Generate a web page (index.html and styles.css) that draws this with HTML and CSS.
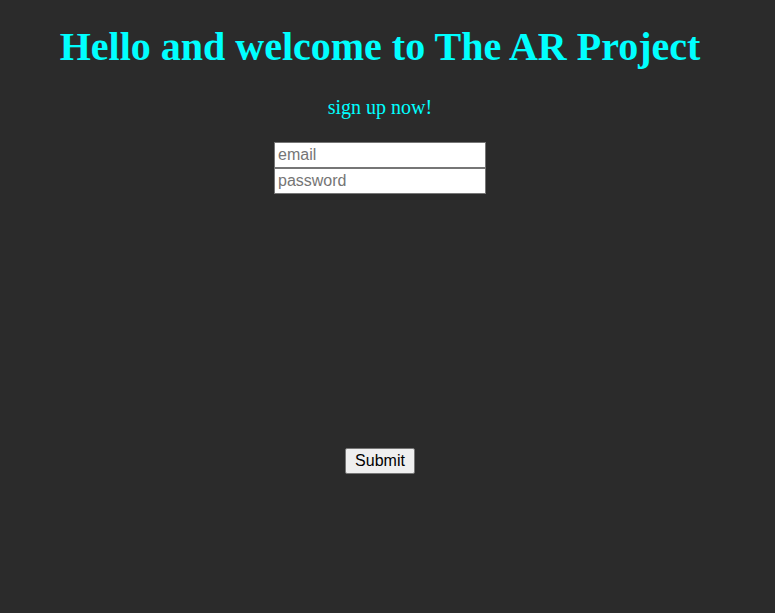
FILE: index.html
```html
<!DOCTYPE html>
<html>
<head>
<meta charset="utf-8">
<link rel="stylesheet" href="styles.css">
</head>
<body>
<h1 class="title">Hello and welcome to The AR Project</h1>
<p class="subtitle">sign up now!</p>
<form class="form">
  <input class="field" type="email" placeholder="email">
  <input class="field" type="password" placeholder="password">
  <button class="submit" type="button">Submit</button>
</form>
</body>
</html>
```
FILE: styles.css
```css
html, body {
  background: #2b2b2b;
}
body {
  margin: 0;
  padding-right: 15px;
  font-family: "Liberation Serif", serif;
  color: cyan;
  text-align: center;
}
.title {
  font-size: 40px;
  font-weight: bold;
  margin: 0;
  padding-top: 24px;
  line-height: 46px;
}
.subtitle {
  font-size: 20px;
  margin: 25px 0 0;
  line-height: 24px;
}
.form {
  display: flex;
  flex-direction: column;
  align-items: center;
  margin-top: 23px;
}
.field {
  box-sizing: border-box;
  width: 212px;
  height: 26px;
  margin: 0;
  padding: 1px 3px;
  border: 1px solid #767676;
  background: #fff;
  font-family: "Liberation Sans", Arial, sans-serif;
  font-size: 16px;
  color: #000;
}
.field::placeholder {
  color: #757575;
}
.submit {
  margin-top: 254px;
  box-sizing: border-box;
  height: 26px;
  width: 70px;
  padding: 1px 6px;
  font-family: "Liberation Sans", Arial, sans-serif;
  font-size: 16px;
  color: #000;
  background: #efefef;
  border: 1px solid #767676;
  border-radius: 2px;
}
```
